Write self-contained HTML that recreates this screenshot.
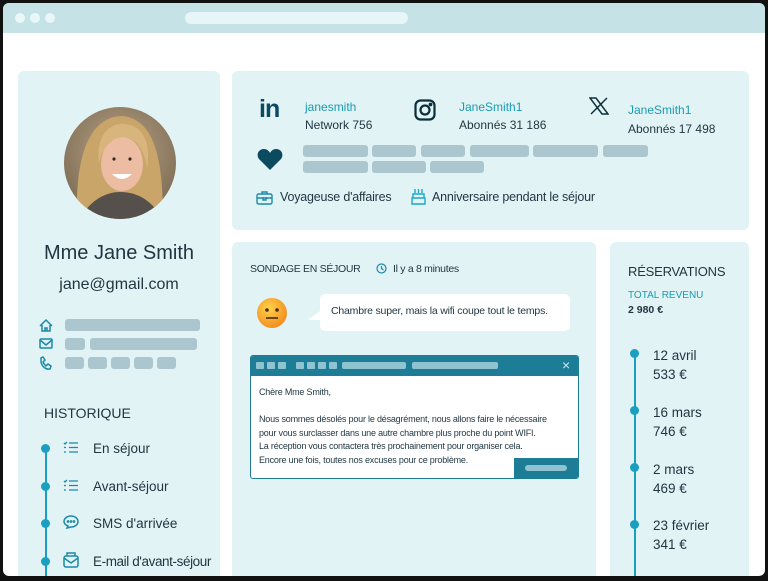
<!DOCTYPE html>
<html><head><meta charset="utf-8"><style>
*{margin:0;padding:0;box-sizing:border-box}
body{width:768px;height:581px;background:#111;position:relative;overflow:hidden;font-family:"Liberation Sans",sans-serif;color:#1f3540}
.a{position:absolute}
.card{position:absolute;background:#e1f3f5;border-radius:6px}
.bar{position:absolute;background:#abc6ce;border-radius:3px;height:12px}
.dot{position:absolute;width:9px;height:9px;border-radius:50%;background:#1a9fc0}
.t{position:absolute;white-space:nowrap}
</style></head><body>
<div class="a" style="left:3px;top:3px;width:762px;height:573px;background:#fff;border-radius:6px;overflow:hidden">
 <div class="a" style="left:0;top:0;width:762px;height:30px;background:#c5e2e6"></div>
 <div class="a" style="left:12px;top:10px;width:10px;height:10px;border-radius:50%;background:#eaf7f8"></div>
 <div class="a" style="left:27px;top:10px;width:10px;height:10px;border-radius:50%;background:#eaf7f8"></div>
 <div class="a" style="left:42px;top:10px;width:10px;height:10px;border-radius:50%;background:#eaf7f8"></div>
 <div class="a" style="left:182px;top:9px;width:223px;height:12px;border-radius:6px;background:#e6f5f7"></div>
</div>

<!-- left card -->
<div class="card" style="left:18px;top:71px;width:202px;height:510px"></div>
<svg class="a" style="left:63px;top:106px" width="114" height="114" viewBox="0 0 114 114">
 <defs><clipPath id="c"><circle cx="57" cy="57" r="56"/></clipPath>
 <radialGradient id="bg" cx="0.5" cy="0.4" r="0.7"><stop offset="0" stop-color="#b8a587"/><stop offset="1" stop-color="#75634d"/></radialGradient></defs>
 <g clip-path="url(#c)">
  <rect width="114" height="114" fill="url(#bg)"/>
  <path d="M14 114 C12 60 22 12 58 10 C94 12 100 60 100 114Z" fill="#c9a56a"/>
  <path d="M16 114 C28 92 45 86 57 86 C72 86 88 92 100 114Z" fill="#55504b"/>
  <ellipse cx="59" cy="58" rx="21" ry="27" fill="#ecbca3"/>
  <path d="M36 58 C32 26 50 16 62 18 C82 20 88 40 84 62 C80 36 66 26 50 34 C42 40 38 48 36 58Z" fill="#d8b57c"/>
  <path d="M49 68 Q59 78 69 68 Z" fill="#fff"/>
  <circle cx="51" cy="53" r="1.6" fill="#3b2a20"/><circle cx="67" cy="53" r="1.6" fill="#3b2a20"/>
 </g>
</svg>
<div class="t" style="left:18px;width:202px;text-align:center;top:242px;font-size:20px">Mme Jane Smith</div>
<div class="t" style="left:18px;width:202px;text-align:center;top:276px;font-size:16px">jane@gmail.com</div>
<svg class="a" style="left:38px;top:318px" width="16" height="54" fill="none" stroke="#1a8aa8" stroke-width="1.5">
 <path d="M2 8 L8 2 L14 8 M4 7 V13 H12 V7 M7 13 V10 H9 V13"/>
 <rect x="2" y="21" width="12" height="9" rx="1"/><path d="M2 22 L8 27 L14 22"/>
 <path d="M3 43 C3 48 8 52 12 51 L13 48 L10 46 L8 48 C7 47 6 46 5 44 L7 42 L5 39 L3 40Z"/>
</svg>
<div class="bar" style="left:65px;top:319px;width:135px"></div>
<div class="bar" style="left:65px;top:338px;width:20px"></div>
<div class="bar" style="left:90px;top:338px;width:107px"></div>
<div class="bar" style="left:65px;top:357px;width:19px"></div>
<div class="bar" style="left:88px;top:357px;width:19px"></div>
<div class="bar" style="left:111px;top:357px;width:19px"></div>
<div class="bar" style="left:134px;top:357px;width:19px"></div>
<div class="bar" style="left:157px;top:357px;width:19px"></div>
<div class="t" style="left:44px;top:405px;font-size:14px">HISTORIQUE</div>
<div class="a" style="left:45px;top:448px;width:2px;height:133px;background:#1a9fc0"></div>
<div class="dot" style="left:41px;top:444px"></div>
<div class="dot" style="left:41px;top:482px"></div>
<div class="dot" style="left:41px;top:519px"></div>
<div class="dot" style="left:41px;top:557px"></div>
<svg class="a" style="left:63px;top:441px" width="16" height="13" stroke="#1a8aa8" stroke-width="1.3" fill="none"><path d="M1 2 L2 3 L4 1 M1 6.5 H3 M1 11 H3 M6 2 H15 M6 6.5 H15 M6 11 H15"/></svg>
<svg class="a" style="left:63px;top:479px" width="16" height="13" stroke="#1a8aa8" stroke-width="1.3" fill="none"><path d="M1 2 L2 3 L4 1 M1 6.5 H3 M1 11 H3 M6 2 H15 M6 6.5 H15 M6 11 H15"/></svg>
<svg class="a" style="left:63px;top:515px" width="16" height="14" fill="none" stroke="#1a8aa8" stroke-width="1.5"><path d="M8 1 C12 1 15 3.5 15 6.5 C15 9.5 12 12 8 12 L4 13 L5 11 C2.5 10 1 8.5 1 6.5 C1 3.5 4 1 8 1Z"/><circle cx="5" cy="6.5" r=".6"/><circle cx="8" cy="6.5" r=".6"/><circle cx="11" cy="6.5" r=".6"/></svg>
<svg class="a" style="left:63px;top:552px" width="16" height="16" fill="none" stroke="#1a8aa8" stroke-width="1.5"><rect x="1" y="4" width="14" height="11" rx="2"/><path d="M1 6 L8 11 L15 6 M4 4 V1 H12 V4"/></svg>
<div class="t" style="left:93px;top:441px;font-size:13.5px">En séjour</div>
<div class="t" style="left:93px;top:479px;font-size:13.5px">Avant-séjour</div>
<div class="t" style="left:93px;top:516px;font-size:13.5px">SMS d'arrivée</div>
<div class="t" style="left:93px;top:554px;font-size:13.5px;letter-spacing:-0.4px">E-mail d'avant-séjour</div>

<!-- top right card -->
<div class="card" style="left:232px;top:71px;width:517px;height:159px"></div>
<div class="t" style="left:259px;top:95px;font-size:25px;font-weight:bold;color:#0c4a60;letter-spacing:-1px">in</div>
<div class="t" style="left:305px;top:100px;font-size:12px;color:#1a9bb0">janesmith</div>
<div class="t" style="left:305px;top:118px;font-size:12px">Network 756</div>
<svg class="a" style="left:414px;top:99px" width="22" height="22" fill="none" stroke="#0c2f3c" stroke-width="2.2"><rect x="1.5" y="1.5" width="19" height="19" rx="5"/><circle cx="11" cy="11" r="4.5"/><circle cx="16.5" cy="5.5" r=".8" fill="#0c2f3c"/></svg>
<div class="t" style="left:459px;top:100px;font-size:12px;color:#1a9bb0">JaneSmith1</div>
<div class="t" style="left:459px;top:118px;font-size:12px">Abonnés 31 186</div>
<svg class="a" style="left:589px;top:97px" width="20" height="18" stroke="#0c2f3c" stroke-width="1.5" fill="none"><path d="M1 1 L7 1 L19 17 L13 17Z M18 1 L2 17"/></svg>
<div class="t" style="left:628px;top:103px;font-size:12px;color:#1a9bb0">JaneSmith1</div>
<div class="t" style="left:628px;top:122px;font-size:12px">Abonnés 17 498</div>
<svg class="a" style="left:257px;top:147px" width="26" height="24"><path d="M13 23 L2 12 C-1 8 1 2 7 2 C10 2 12 4 13 6 C14 4 16 2 19 2 C25 2 27 8 24 12Z" fill="#0c4a60"/></svg>
<div class="bar" style="left:303px;top:145px;width:65px"></div>
<div class="bar" style="left:372px;top:145px;width:44px"></div>
<div class="bar" style="left:421px;top:145px;width:44px"></div>
<div class="bar" style="left:470px;top:145px;width:59px"></div>
<div class="bar" style="left:533px;top:145px;width:65px"></div>
<div class="bar" style="left:603px;top:145px;width:45px"></div>
<div class="bar" style="left:303px;top:161px;width:65px"></div>
<div class="bar" style="left:372px;top:161px;width:54px"></div>
<div class="bar" style="left:430px;top:161px;width:54px"></div>
<svg class="a" style="left:256px;top:190px" width="17" height="15" fill="none" stroke="#1a8aa8" stroke-width="1.4"><rect x="1" y="4" width="15" height="10" rx="1.5"/><path d="M6 4 V2 H11 V4 M1 8 H16 M7 7 V10 H10 V7"/></svg>
<div class="t" style="left:280px;top:190px;font-size:12.5px;letter-spacing:-0.2px">Voyageuse d'affaires</div>
<svg class="a" style="left:411px;top:188px" width="15" height="17" fill="none" stroke="#1aa8c8" stroke-width="1.4"><path d="M4 1 V5 M7.5 1 V5 M11 1 V5 M2 6 H13 V10 H2Z M1 10 H14 V16 H1Z"/></svg>
<div class="t" style="left:432px;top:190px;font-size:12.5px;letter-spacing:-0.2px">Anniversaire pendant le séjour</div>

<!-- middle card -->
<div class="card" style="left:232px;top:242px;width:364px;height:339px"></div>
<div class="t" style="left:250px;top:263px;font-size:10.5px;letter-spacing:-0.3px">SONDAGE EN SÉJOUR</div>
<svg class="a" style="left:376px;top:263px" width="11" height="11" fill="none" stroke="#1a8aa8" stroke-width="1.2"><circle cx="5.5" cy="5.5" r="4.5"/><path d="M5.5 3 V5.5 L7.5 7"/></svg>
<div class="t" style="left:393px;top:263px;font-size:10.5px;letter-spacing:-0.3px">Il y a 8 minutes</div>
<svg class="a" style="left:256px;top:297px" width="32" height="32"><defs><radialGradient id="e" cx=".4" cy=".35" r=".7"><stop offset="0" stop-color="#ffd24a"/><stop offset="1" stop-color="#f28a1e"/></radialGradient></defs><circle cx="16" cy="16" r="15" fill="url(#e)"/><circle cx="11" cy="13" r="1.8" fill="#4a2a10"/><circle cx="21" cy="13" r="1.8" fill="#4a2a10"/><path d="M10 21 H22" stroke="#4a2a10" stroke-width="1.6"/></svg>
<svg class="a" style="left:308px;top:293px" width="263" height="39"><path d="M18 1 H256 Q262 1 262 7 V32 Q262 38 256 38 H18 Q12 38 12 32 V27 L0 27 L12 18 V7 Q12 1 18 1Z" fill="#fff"/></svg>
<div class="t" style="left:331px;top:305px;font-size:10.5px;letter-spacing:-0.2px">Chambre super, mais la wifi coupe tout le temps.</div>
<div class="a" style="left:250px;top:355px;width:329px;height:124px;background:#fff;border:1.5px solid #1d7d96;border-radius:3px;overflow:hidden">
 <div class="a" style="left:0;top:0;width:329px;height:20px;background:#1d7d96"></div>
 <div class="a" style="left:5px;top:6px;width:8px;height:7px;background:#8fc3d0;border-radius:1px"></div>
 <div class="a" style="left:16px;top:6px;width:8px;height:7px;background:#8fc3d0;border-radius:1px"></div>
 <div class="a" style="left:27px;top:6px;width:8px;height:7px;background:#8fc3d0;border-radius:1px"></div>
 <div class="a" style="left:45px;top:6px;width:8px;height:7px;background:#8fc3d0;border-radius:1px"></div>
 <div class="a" style="left:56px;top:6px;width:8px;height:7px;background:#8fc3d0;border-radius:1px"></div>
 <div class="a" style="left:67px;top:6px;width:8px;height:7px;background:#8fc3d0;border-radius:1px"></div>
 <div class="a" style="left:78px;top:6px;width:8px;height:7px;background:#8fc3d0;border-radius:1px"></div>
 <div class="a" style="left:91px;top:6px;width:64px;height:7px;background:#8fc3d0;border-radius:2px"></div>
 <div class="a" style="left:161px;top:6px;width:86px;height:7px;background:#8fc3d0;border-radius:2px"></div>
 <div class="t" style="left:311px;top:1px;font-size:14px;color:#cfe7ee">×</div>
 <div class="a" style="left:263px;top:102px;width:66px;height:22px;background:#1d7d96"></div>
 <div class="a" style="left:274px;top:109px;width:42px;height:6px;background:#8fc3d0;border-radius:3px"></div>
</div>
<div class="t" style="left:259px;top:387px;font-size:9px;letter-spacing:-0.2px">Chère Mme Smith,</div>
<div class="t" style="left:259px;top:413px;font-size:9px;line-height:13.7px;letter-spacing:-0.2px">Nous sommes désolés pour le désagrément, nous allons faire le nécessaire<br>pour vous surclasser dans une autre chambre plus proche du point WIFI.<br>La réception vous contactera très prochainement pour organiser cela.<br>Encore une fois, toutes nos excuses pour ce problème.</div>

<!-- right card -->
<div class="card" style="left:610px;top:242px;width:139px;height:339px"></div>
<div class="t" style="left:628px;top:264px;font-size:13px;letter-spacing:-0.2px">RÉSERVATIONS</div>
<div class="t" style="left:628px;top:290px;font-size:10px;color:#1a9bb0">TOTAL REVENU</div>
<div class="t" style="left:628px;top:304px;font-size:10.5px;font-weight:bold">2 980 €</div>
<div class="a" style="left:634px;top:353px;width:2px;height:228px;background:#1a9fc0"></div>
<div class="dot" style="left:630px;top:349px"></div>
<div class="dot" style="left:630px;top:406px"></div>
<div class="dot" style="left:630px;top:463px"></div>
<div class="dot" style="left:630px;top:520px"></div>
<div class="t" style="left:653px;top:346px;font-size:13.5px;line-height:19px">12 avril<br>533 €</div>
<div class="t" style="left:653px;top:403px;font-size:13.5px;line-height:19px">16 mars<br>746 €</div>
<div class="t" style="left:653px;top:460px;font-size:13.5px;line-height:19px">2 mars<br>469 €</div>
<div class="t" style="left:653px;top:516px;font-size:13.5px;line-height:19px">23 février<br>341 €</div>

<div class="a" style="left:0;top:576px;width:768px;height:5px;background:#111"></div>
<div class="a" style="left:765px;top:0;width:3px;height:581px;background:#111"></div>
<div class="a" style="left:0;top:0;width:3px;height:581px;background:#111"></div>
</body></html>
